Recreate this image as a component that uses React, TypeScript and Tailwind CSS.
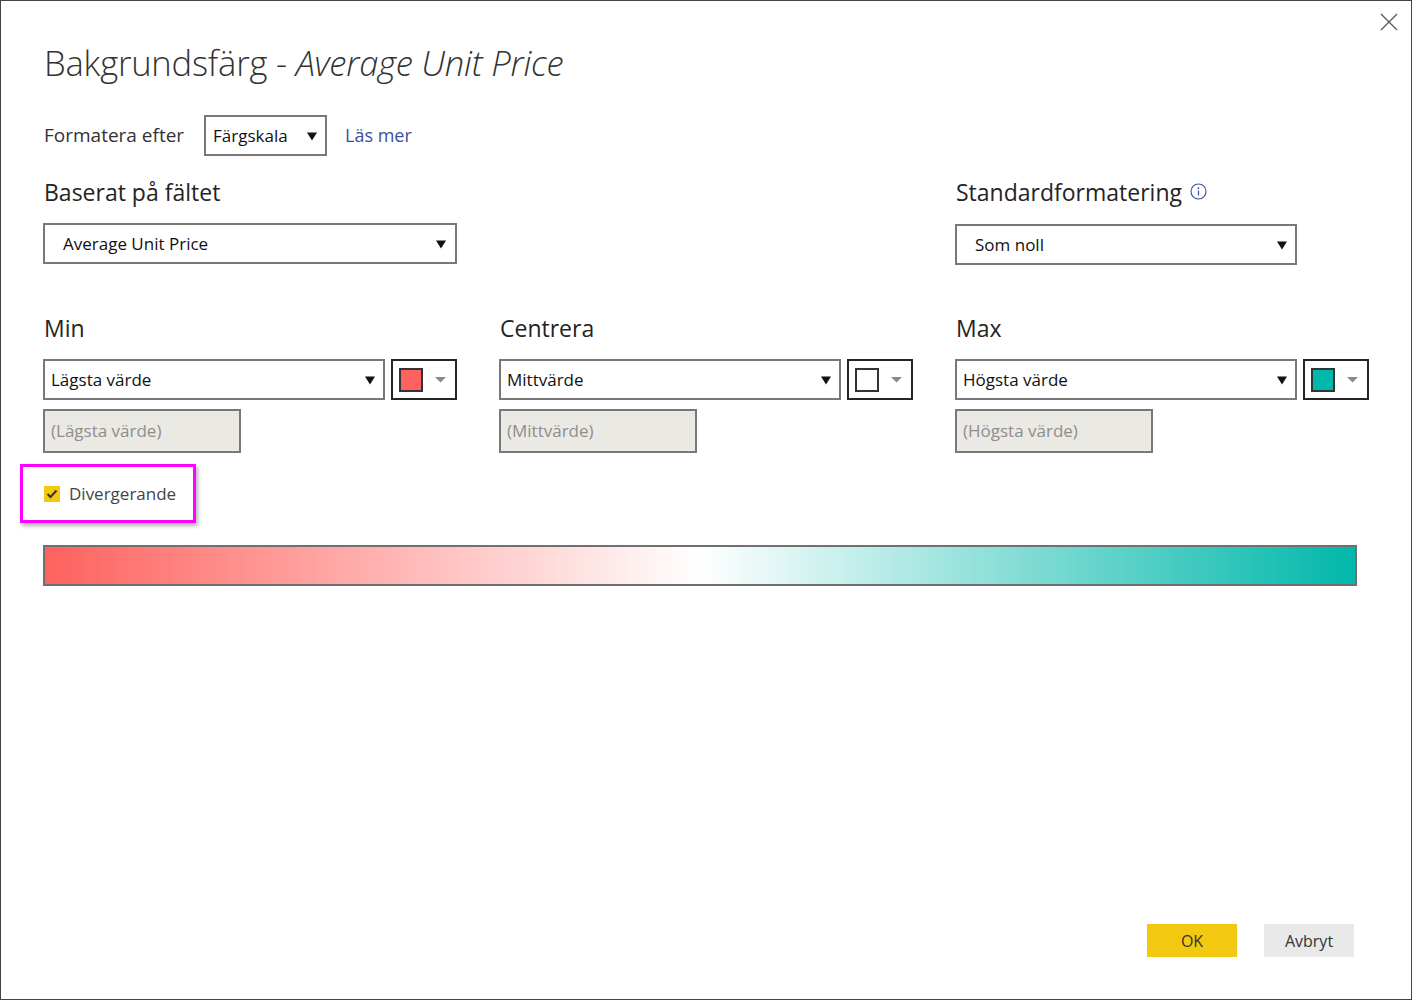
const Arrow = () => (
    <svg width="10" height="10" viewBox="0 0 10 10" className="shrink-0">
        <path d="M0 1.5 H10 L5 9.5 Z" fill="#111" />
    </svg>
);

const SmallArrow = () => (
    <svg width="11" height="6" viewBox="0 0 11 6" className="shrink-0">
        <path d="M0 0 H11 L5.5 5.5 Z" fill="#8a8a8a" />
    </svg>
);

interface DropdownProps {
    value: string;
    className?: string;
}

const Dropdown = ({ value, className }: DropdownProps) => (
    <div className={`h-[41px] border-2 border-[#787878] flex items-center justify-between text-[17px] text-[#111] ${className ?? ''}`}>
        <span>{value}</span>
        <Arrow />
    </div>
);

interface ColumnProps {
    title: string;
    value: string;
    placeholder: string;
    swatch: string;
}

const Column = ({ title, value, placeholder, swatch }: ColumnProps) => (
    <div className="flex flex-col">
        <div className="text-[23px] text-[#252423] h-[32px] leading-[32px] pl-[1px]">{title}</div>
        <div className="flex gap-[6px] mt-[15px]">
            <Dropdown value={value} className="w-[342px] pl-[6px] pr-[8px]" />
            <div className="w-[66px] h-[41px] border-2 border-[#252525] flex items-center pl-[6px] gap-[12px]">
                <div className="w-[24px] h-[24px] border-2 border-[#333]" style={{ backgroundColor: swatch }} />
                <SmallArrow />
            </div>
        </div>
        <div className="mt-[9px] w-[198px] h-[44px] bg-[#eae9e4] border-2 border-[#787878] flex items-center pl-[6px] text-[17px] text-[#8e8e8e]">
            {placeholder}
        </div>
    </div>
);

export default function App() {
    return (
        <div className="w-[1412px] h-[1000px] border border-[#454545] bg-white relative flex flex-col" style={{ fontFamily: '"Segoe UI", "Open Sans", "Noto Sans", sans-serif' }}>
            <button className="absolute top-[12px] right-[13px]">
                <svg width="18" height="18" viewBox="0 0 18 18">
                    <path d="M1 1 L17 17 M17 1 L1 17" stroke="#555" strokeWidth="1.2" />
                </svg>
            </button>

            <div className="pl-[42px] pt-[38px]">
                <h1 className="text-[34.6px] font-light text-[#333] leading-[48px] tracking-[-0.2px] pl-[1px]">
                    Bakgrundsfärg - <span className="italic">Average Unit Price</span>
                </h1>

                <div className="flex items-center mt-[28px]">
                    <span className="text-[19px] text-[#333] w-[161px] pl-[1px]">Formatera efter</span>
                    <Dropdown value="Färgskala" className="w-[123px] pl-[7px] pr-[8px]" />
                    <a href="#" className="ml-[18px] text-[18px] text-[#3b4ea3]">Läs mer</a>
                </div>

                <div className="grid grid-cols-[414px_414px_414px] gap-x-[42px] mt-[20px]">
                    <div>
                        <div className="text-[23px] text-[#252423] h-[32px] leading-[32px] pl-[1px]">Baserat på fältet</div>
                        <Dropdown value="Average Unit Price" className="mt-[15px] w-[414px] pl-[18px] pr-[9px]" />
                    </div>
                    <div />
                    <div>
                        <div className="flex items-center gap-[8px] text-[23px] text-[#252423] h-[32px] leading-[32px] pl-[1px]">
                            Standardformatering
                            <svg width="17" height="17" viewBox="0 0 17 17" className="-mt-[2px]">
                                <circle cx="8.5" cy="8.5" r="7.5" fill="none" stroke="#3b4ea3" strokeWidth="1.1" />
                                <circle cx="8.5" cy="5.2" r="0.9" fill="#3b4ea3" />
                                <path d="M8.5 7.5 V12.5" stroke="#3b4ea3" strokeWidth="1.2" />
                            </svg>
                        </div>
                        <Dropdown value="Som noll" className="mt-[16px] w-[342px] pl-[18px] pr-[8px]" />
                    </div>
                </div>

                <div className="grid grid-cols-[414px_414px_414px] gap-x-[42px] mt-[47px]">
                    <Column title="Min" value="Lägsta värde" placeholder="(Lägsta värde)" swatch="#fd625e" />
                    <Column title="Centrera" value="Mittvärde" placeholder="(Mittvärde)" swatch="#ffffff" />
                    <Column title="Max" value="Högsta värde" placeholder="(Högsta värde)" swatch="#01b8aa" />
                </div>

                <div className="-ml-[23px] mt-[11px] w-[176px] h-[59px] border-[3px] border-[#ff00ff] shadow-[2px_3px_4px_rgba(0,0,0,0.3)] flex items-center pl-[21px] gap-[9px]">
                    <div className="w-[16px] h-[16px] bg-[#f2c811] flex items-center justify-center">
                        <svg width="12" height="10" viewBox="0 0 12 10">
                            <path d="M1.5 5 L4.5 8 L10.5 1.5" fill="none" stroke="#333" strokeWidth="2" />
                        </svg>
                    </div>
                    <span className="text-[17px] text-[#444]">Divergerande</span>
                </div>

                <div
                    className="mt-[22px] w-[1314px] h-[41px] border-2 border-[#707070]"
                    style={{ background: 'linear-gradient(to right, #fd625e 0%, #ffffff 50%, #01b8aa 100%)' }}
                />
            </div>

            <div className="mt-auto mb-[42px] flex justify-end gap-[27px] pr-[57px]">
                <button className="w-[90px] h-[33px] bg-[#f2c811] text-[16px] text-[#333]">OK</button>
                <button className="w-[90px] h-[33px] bg-[#e9e9e9] text-[16px] text-[#333]">Avbryt</button>
            </div>
        </div>
    );
}
